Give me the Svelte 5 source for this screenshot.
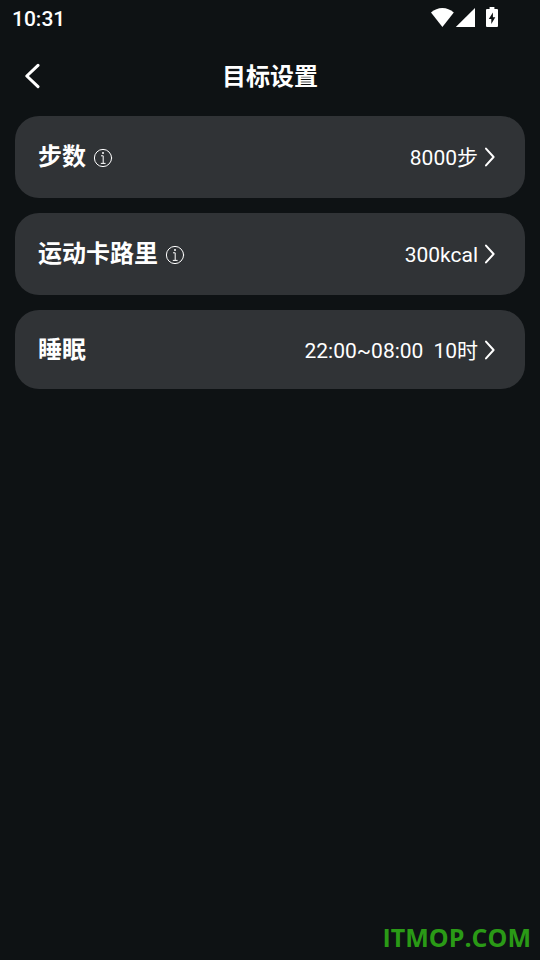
<script lang="ts">
  type Goal = { id: string; label: string; value: string; extra?: string; info: boolean };

  let goals: Goal[] = $state([
    { id: 'steps', label: '步数', value: '8000步', info: true },
    { id: 'calories', label: '运动卡路里', value: '300kcal', info: true },
    { id: 'sleep', label: '睡眠', value: '22:00~08:00', extra: '10时', info: false },
  ]);
</script>

<div class="screen">
  <div class="status">
    <span>10:31</span>
    <div class="status-icons">
      <svg width="24" height="20" viewBox="0 0 24 20">
        <path d="M12.4 20 1 5.6C4.4 2.6 8.2 1 12.4 1s8 1.6 11.4 4.6z" />
      </svg>
      <svg width="20" height="20" viewBox="0 0 20 20">
        <path d="M0.8 20 20 1V20z" />
      </svg>
      <svg class="battery" width="12" height="20" viewBox="0 0 12 20">
        <path fill-rule="evenodd" d="M3.6 0h4.8v2H11q1 0 1 1v16q0 1-1 1H1q-1 0-1-1V3q0-1 1-1h2.6zM6.9 5.5 2.8 12h2.5v5l4-6.8H6.9z" />
      </svg>
    </div>
  </div>

  <header>
    <button class="back" aria-label="返回">
      <svg width="16" height="26" viewBox="0 0 16 26">
        <path d="M14 2.4 2.8 13 14 23.6" />
      </svg>
    </button>
    <h1>目标设置</h1>
  </header>

  <main>
    {#each goals as goal (goal.id)}
      <section class="card" class:tall={goal.info}>
        <h2 id={goal.id}>{goal.label}</h2>
        {#if goal.info}
          <button class="info" aria-label="说明">
            <svg width="20" height="20" viewBox="0 0 20 20">
              <circle cx="10" cy="10" r="8.6" />
              <path d="M8.4 7.8h1.8v7.4M8.2 15.4h4" />
              <circle class="dot" cx="10" cy="5" r="1" />
            </svg>
          </button>
        {/if}
        <button class="value" aria-describedby={goal.id}>
          <span>{goal.value}</span>
          {#if goal.extra}
            <span class="extra">{goal.extra}</span>
          {/if}
          <svg width="12" height="20" viewBox="0 0 12 20">
            <path d="M2 1.6 9.6 10 2 18.4" />
          </svg>
        </button>
      </section>
    {/each}
  </main>

  <footer>ITMOP.COM</footer>
</div>

<style>
  :global(body) {
    background: #0e1214;
  }

  .screen {
    display: flex;
    flex-direction: column;
    min-height: 100vh;
    color: #fff;
    font-family: Roboto, "Noto Sans CJK SC", sans-serif;
  }

  button {
    display: flex;
    align-items: center;
    padding: 0;
    border: none;
    background: none;
    color: inherit;
    font: inherit;
    cursor: pointer;
  }

  svg {
    display: block;
    fill: none;
    stroke: #fff;
    stroke-width: 2;
    stroke-linecap: round;
    stroke-linejoin: round;
  }

  .status {
    display: flex;
    justify-content: space-between;
    height: 36px;
    padding: 0 42px 0 12px;
    font-size: 21px;
    font-weight: 500;
    line-height: 38px;
  }

  .status-icons {
    display: flex;
    gap: 1px;
    height: 34px;
    align-items: center;
  }

  .status-icons svg {
    fill: #fff;
    stroke: none;
  }

  .battery {
    margin-left: 10px;
  }

  header {
    display: grid;
    grid-template-columns: 40px 1fr 40px;
    align-items: center;
    height: 80px;
    padding: 0 24px;
  }

  .back svg {
    stroke-width: 3;
  }

  h1,
  h2 {
    margin: 0;
    font-size: 24px;
    line-height: 36px;
    font-weight: 700;
  }

  h1 {
    padding-top: 2px;
    text-align: center;
  }

  main {
    display: flex;
    flex-direction: column;
    gap: 15px;
    padding: 0 15px;
  }

  .card {
    display: flex;
    align-items: center;
    min-height: 79px;
    padding: 0 29px 0 23px;
    border-radius: 24px;
    background: #303336;
  }

  .card.tall {
    min-height: 82px;
  }

  .info {
    margin-left: 7px;
    padding-top: 2px;
  }

  .info svg {
    stroke-width: 1;
  }

  .info .dot {
    fill: #fff;
    stroke: none;
  }

  .value {
    margin-left: auto;
    font-size: 21px;
    line-height: 30px;
  }

  .value span {
    padding-top: 2px;
  }

  .value svg {
    margin-left: 6px;
  }

  .value .extra {
    margin-left: 10px;
  }

  footer {
    margin-top: auto;
    padding: 0 9px 6px;
    color: #2a9a16;
    font-family: "Open Sans", sans-serif;
    font-size: 25px;
    font-weight: 700;
    line-height: 34px;
    text-align: right;
  }
</style>
